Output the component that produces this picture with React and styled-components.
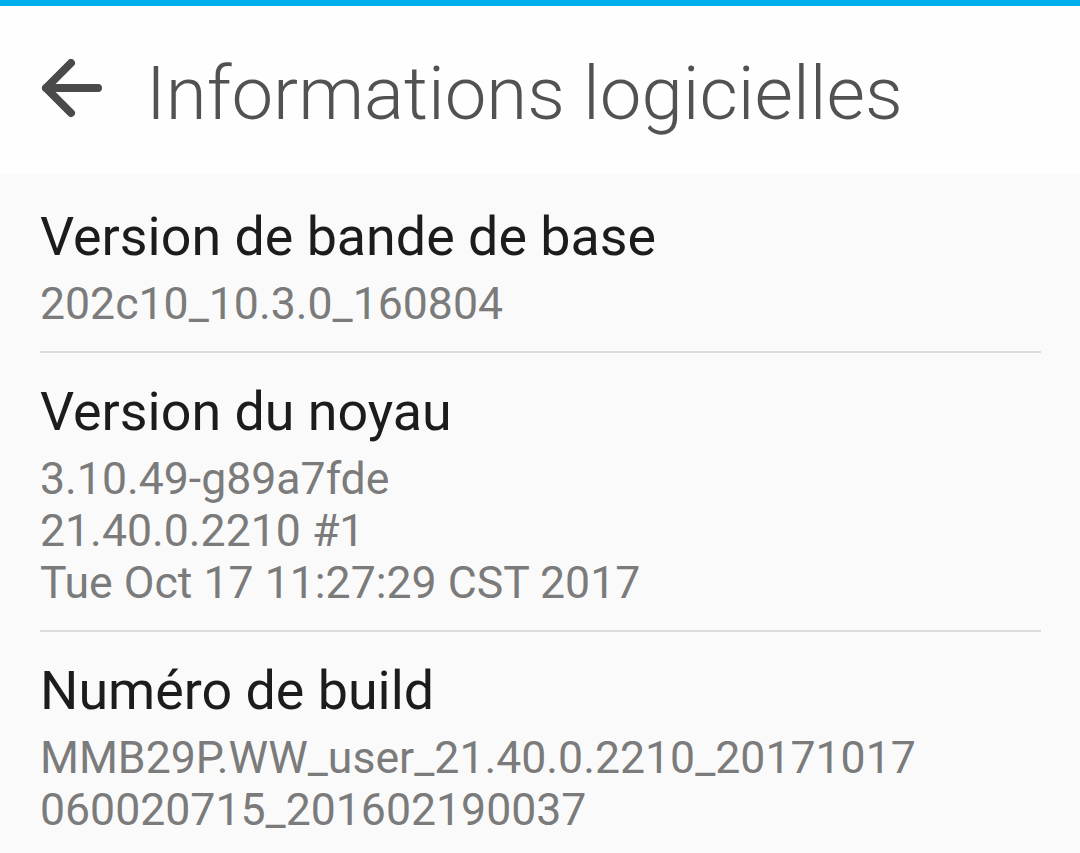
import React from 'react';
import styled, { createGlobalStyle } from 'styled-components';

const GlobalStyle = createGlobalStyle`
  html, body {
    margin: 0;
    padding: 0;
    background: #fafafa;
    font-family: Roboto, "Noto Sans", "Liberation Sans", sans-serif;
  }
`;

const Screen = styled.div`
  width: 1080px;
  height: 853px;
  overflow: hidden;
  background: #fafafa;
  border-top: 6px solid #00b0ec;
  box-sizing: border-box;
`;

const Header = styled.header`
  height: 168px;
  box-sizing: border-box;
  padding: 6px 0 0 40px;
  background: #fefefe;
  display: flex;
  align-items: center;
  gap: 44px;
`;

const BackButton = styled.button`
  border: 0;
  background: none;
  padding: 0;
  width: 62px;
  height: 62px;
  margin-top: -6px;
  display: flex;
  align-items: center;
  justify-content: center;
  color: #4a4a4a;
`;

const Title = styled.h1`
  margin: 0;
  font-size: 74.4px;
  font-weight: 300;
  color: #525252;
`;

const List = styled.div`
  display: flex;
  flex-direction: column;
  padding: 0 39px 0 40px;
`;

const Item = styled.div`
  display: flex;
  flex-direction: column;
  gap: 11px;
  padding: ${p => (p.$first ? '33px' : '29px')} 0 21px;
  border-bottom: ${p => (p.$last ? '0' : '2px solid #dcdcdc')};
`;

const Label = styled.div`
  font-size: 53.8px;
  line-height: 60px;
  color: #1c1c1c;
`;

const Value = styled.div`
  font-size: 44.6px;
  line-height: 52px;
  color: #7b7b7b;
`;

const items = [
  { label: 'Version de bande de base', lines: ['202c10_10.3.0_160804'] },
  {
    label: 'Version du noyau',
    lines: ['3.10.49-g89a7fde', '21.40.0.2210 #1', 'Tue Oct 17 11:27:29 CST 2017'],
  },
  {
    label: 'Numéro de build',
    lines: ['MMB29P.WW_user_21.40.0.2210_20171017', '060020715_201602190037'],
  },
];

export default function App() {
  return (
    <Screen>
      <GlobalStyle />
      <Header>
        <BackButton aria-label="Retour">
          <svg width="62" height="62" viewBox="0 0 62 62" fill="none">
            <path
              d="M58 29H6M31 4L6 29l25 25"
              stroke="currentColor"
              strokeWidth="8"
              strokeLinecap="round"
              strokeLinejoin="round"
            />
          </svg>
        </BackButton>
        <Title>Informations logicielles</Title>
      </Header>
      <List>
        {items.map((item, i) => (
          <Item key={item.label} $first={i === 0} $last={i === items.length - 1}>
            <Label>{item.label}</Label>
            <div>
              {item.lines.map(l => (
                <Value key={l}>{l}</Value>
              ))}
            </div>
          </Item>
        ))}
      </List>
    </Screen>
  );
}
